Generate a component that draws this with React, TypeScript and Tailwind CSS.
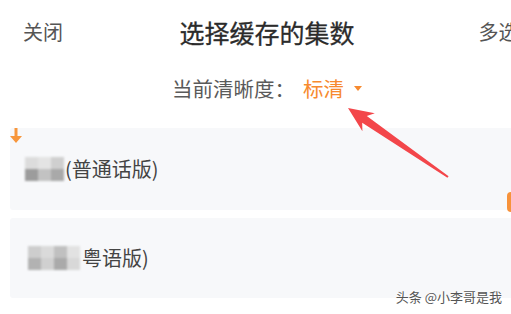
import React from 'react';

const mosaicOne = [
  ['#dcdcdc', '#e4e4e4', '#cfcfcf'],
  ['#9c9c9c', '#c2c2c2', '#a9a9a9'],
];

const mosaicTwo = [
  ['#cdcdcd', '#dadada', '#c0c0c0', '#e2e2e2'],
  ['#b2b2b2', '#d0d0d0', '#aaaaaa', '#d8d8d8'],
];

function Mosaic({ rows }: { rows: string[][] }) {
  return (
    <div className="flex flex-col blur-[1.2px]">
      {rows.map((row, i) => (
        <div key={i} className="flex">
          {row.map((c, j) => (
            <div key={j} className="w-[13px] h-[12px]" style={{ backgroundColor: c }} />
          ))}
        </div>
      ))}
    </div>
  );
}

export default function App() {
  return (
    <div className="relative w-[511px] h-[314px] overflow-hidden bg-white font-['Noto_Sans_CJK_SC',sans-serif]">
      <div className="w-[534px]">
        {/* header */}
        <div className="grid grid-cols-[1fr_auto_1fr] items-center h-[64px] leading-none">
          <span className="pl-[23px] text-[20px] text-[#555]">关闭</span>
          <h1 className="text-[25px] font-normal text-[#2b2b2b] [-webkit-text-stroke:0.3px_#2b2b2b]">选择缓存的集数</h1>
          <span className="pl-[124px] text-[20px] text-[#555] whitespace-nowrap">多选</span>
        </div>

        {/* quality */}
        <div className="flex items-center justify-center h-[48px] text-[20.5px] leading-none">
          <span className="text-[#5a5a5a]">当前清晰度：</span>
          <span className="ml-[8px] text-[#f78a2f]">标清</span>
          <svg className="ml-[10px]" width="8" height="5" viewBox="0 0 8 5">
            <path d="M0 0 L8 0 L4 5 Z" fill="#f78a2f" />
          </svg>
        </div>

        {/* episodes */}
        <div className="mt-[16px] px-[10px] flex flex-col gap-[8px]">
          <div className="relative h-[82px] rounded-[3px] bg-[#f7f8fa] flex items-center pl-[15px] text-[20px] text-[#444] leading-none">
            <svg className="absolute left-0 top-0" width="12" height="15" viewBox="0 0 12 15">
              <path d="M4.5 0 H7.5 V8 H12 L6 15 L0 8 H4.5 Z" fill="#f7963c" />
            </svg>
            <Mosaic rows={mosaicOne} />
            <span className="ml-[1px]">(普通话版)</span>
            <div className="absolute left-[497px] top-[64px] w-[26px] h-[20px] rounded-[4px] bg-[#f7923a]" />
          </div>
          <div className="h-[80px] rounded-[3px] bg-[#f7f8fa] flex items-center pl-[18px] text-[20px] text-[#444] leading-none">
            <Mosaic rows={mosaicTwo} />
            <span className="ml-[2px]">粤语版)</span>
          </div>
        </div>
      </div>

      {/* annotation arrow */}
      <svg className="absolute inset-0 pointer-events-none" width="511" height="314" viewBox="0 0 511 314">
        <polygon
          points="348,108 374.8,113.2 366.8,116.1 448.6,176.2 447.4,177.8 362.2,122.7 362.4,131.3"
          fill="#f3464a"
        />
      </svg>

      {/* watermark */}
      <span className="absolute right-[9px] top-[290px] text-[13px] leading-none text-[#555] [text-shadow:0_0_2px_#fff,0_0_2px_#fff]">
        头条 @小李哥是我
      </span>
    </div>
  );
}
